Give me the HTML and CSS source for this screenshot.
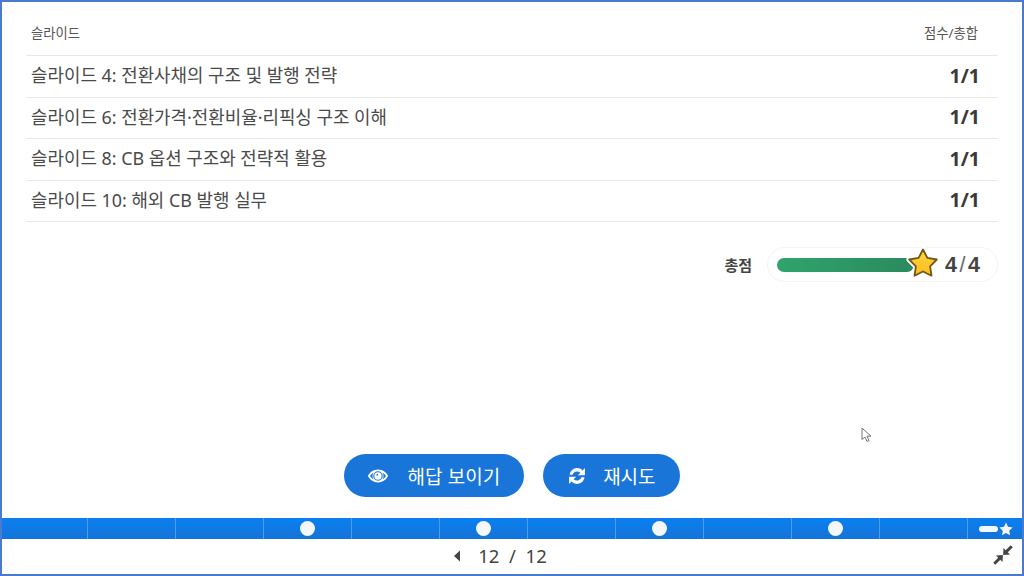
FILE: index.html
```html
<!DOCTYPE html>
<html lang="ko">
<head>
<meta charset="utf-8">
<title>슬라이드 결과</title>
<link rel="stylesheet" href="styles.css">
</head>
<body>
<div class="frame">
  <main class="stage">
    <div class="table">
      <div class="row head"><span>슬라이드</span><span>점수/총합</span></div>
      <div class="row item"><span>슬라이드 4: 전환사채의 구조 및 발행 전략</span><b>1/1</b></div>
      <div class="row item"><span>슬라이드 6: 전환가격·전환비율·리픽싱 구조 이해</span><b>1/1</b></div>
      <div class="row item"><span>슬라이드 8: CB 옵션 구조와 전략적 활용</span><b>1/1</b></div>
      <div class="row item"><span>슬라이드 10: 해외 CB 발행 실무</span><b>1/1</b></div>
    </div>
    <div class="total">
      <span class="total-label">총점</span>
      <div class="total-pill">
        <div class="track"></div>
        <svg class="star" viewBox="0 0 36 36" width="36" height="36"><defs><linearGradient id="gold" x1="0" y1="0" x2="0" y2="1"><stop offset="0" stop-color="#ffd53f"/><stop offset="1" stop-color="#fdbd1f"/></linearGradient></defs><path d="M18 3.500L22.400 11.900 31.800 13.500 25.100 20.300 26.500 29.700 18 25.500 9.500 29.700 10.900 20.300 4.200 13.500 13.600 11.900z" fill="none" stroke="#fff" stroke-width="5.500" stroke-linejoin="round"/><path d="M18 3.500L22.400 11.900 31.800 13.500 25.100 20.300 26.500 29.700 18 25.500 9.500 29.700 10.900 20.300 4.200 13.500 13.600 11.900z" fill="url(#gold)" stroke="#6f5715" stroke-width="1.800" stroke-linejoin="round"/></svg>
        <span class="total-value">4<em>/</em>4</span>
      </div>
    </div>
    <div class="actions">
      <button class="btn btn-show">
        <svg viewBox="0 0 24 24" width="22" height="22"><path fill="#fff" fill-rule="evenodd" d="M12 5C7 5 3 8 1 12c2 4 6 7 11 7s9-3 11-7c-2-4-6-7-11-7zm0 1.800a5.200 5.200 0 1 1 0 10.400 5.200 5.200 0 0 1 0-10.400zM3.300 12c1-1.700 2.400-3 4-3.800a6.500 6.500 0 0 0 0 7.600A9.800 9.800 0 0 1 3.300 12zm17.400 0c-1 1.700-2.400 3-4 3.800a6.500 6.500 0 0 0 0-7.600c1.600.8 3 2.100 4 3.800z"/><path fill="#fff" fill-rule="evenodd" d="M12 8a4 4 0 1 1 0 8 4 4 0 0 1 0-8zm0 1.500a2 2 0 0 0-2 2h2z"/></svg>
        <span>해답 보이기</span>
      </button>
      <button class="btn btn-retry">
        <svg viewBox="0 0 24 24" width="20" height="20"><path fill="#fff" d="M12 2.500c2.600 0 5 1 6.700 2.800L21.500 2.500V11h-8.500l3-3A5.800 5.800 0 0 0 6.600 10.500H3A9.200 9.200 0 0 1 12 2.500zM2.500 13H11l-3 3a5.800 5.800 0 0 0 9.400-2.500H21A9.200 9.200 0 0 1 5.300 18.700L2.500 21.500z"/></svg>
        <span>재시도</span>
      </button>
    </div>
    <svg class="cursor" viewBox="0 0 12 16" width="12" height="16"><path d="M1 1v11.500l3-2.500 2 4.500 2-1-2-4.300h4z" fill="#fff" stroke="#666" stroke-width=".9"/></svg>
  </main>
  <div class="progress">
    <i></i><i></i><i></i><i class="done"></i><i></i><i class="done"></i><i></i><i class="done"></i><i></i><i class="done"></i><i></i>
    <i class="end"><span class="mini-bar"></span><svg viewBox="0 0 24 24" width="14" height="14"><path fill="#f4f7fb" d="M12 1l3.400 7.300 7.900 1-5.800 5.500 1.500 7.900-7-3.900-7 3.900 1.500-7.900L.7 9.300l7.900-1z"/></svg></i>
  </div>
  <footer class="pager">
    <div class="pager-center">
      <svg class="prev" viewBox="0 0 8 12" width="8" height="12"><path d="M7 .5v11L1 6z" fill="#444"/></svg>
      <span class="pages">12&nbsp; / &nbsp;12</span>
    </div>
    <svg class="shrink" viewBox="0 0 20 20" width="20" height="20"><path fill="#444" d="M19.800 2.300L17.700.2l-5 5-2.200-2.200-.4 6.900 6.900-.4-2.200-2.200zM.2 17.700l2.100 2.100 5-5 2.200 2.200.4-6.900-6.900.4 2.200 2.200z"/></svg>
  </footer>
</div>
</body>
</html>
```
FILE: styles.css
```css
* { box-sizing: border-box; }
html, body { margin: 0; height: 100%; }
body {
  font-family: "Noto Sans", "Noto Sans CJK KR", sans-serif;
  color: #444;
  background: #fff;
}
.frame {
  width: 1024px;
  height: 576px;
  border: 2px solid #4a7bd0;
  display: flex;
  flex-direction: column;
  overflow: hidden;
}
.stage {
  position: relative;
  flex: 1;
  display: flex;
  flex-direction: column;
  padding: 0 24px;
}
.table { display: flex; flex-direction: column; }
.row {
  display: flex;
  justify-content: space-between;
  align-items: center;
  padding: 0 20px 0 5px;
  border-bottom: 1px solid #e8e8e8;
}
.head { height: 54px; padding-top: 7px; font-size: 13.300px; color: #555; }
.item { height: 41.500px; padding: 0 18px 4px 5px; font-size: 17.900px; color: #4a4a4a; }
.item b { font-size: 19.500px; font-weight: 700; color: #3a3a3a; margin-top: 2px; }
.total {
  display: flex;
  justify-content: flex-end;
  align-items: center;
  gap: 15px;
  margin-top: 25px;
}
.total-label { font-size: 15px; font-weight: 700; color: #444; }
.total-pill {
  position: relative;
  width: 231px;
  height: 35px;
  border: 1px solid #f4f4f4;
  border-radius: 18px;
  display: flex;
  align-items: center;
  padding-left: 9px;
}
.track {
  width: 137px;
  height: 14px;
  border-radius: 7px;
  background: linear-gradient(90deg, #2fa46c, #2b8a5e);
}
.star { position: absolute; left: 137px; top: -2px; }
.total-value {
  position: absolute;
  left: 177px;
  top: 50%;
  transform: translateY(-50%);
  font: 700 21.500px "Liberation Sans", sans-serif;
  color: #444;
}
.total-value em { font-style: normal; font-weight: 400; margin: 0 2.500px; color: #666; }
.actions {
  display: flex;
  justify-content: center;
  gap: 19px;
  margin-top: auto;
  margin-bottom: 21px;
}
.btn {
  height: 43px;
  display: flex;
  align-items: center;
  border: 0;
  border-radius: 22px;
  background: #1976d8;
  color: #fff;
  font: 400 19px "Noto Sans CJK KR", sans-serif;
}
.btn-show { padding: 0 24px 0 23px; gap: 18px; }
.btn-retry { padding: 0 24px; gap: 16px; }
.cursor { position: absolute; left: 859px; top: 425px; }
.progress {
  height: 21px;
  flex: none;
  display: grid;
  grid-template-columns: 86px repeat(10, 88px) 1fr;
  background: linear-gradient(#0a80f0, #1573d8);
}
.progress i {
  display: flex;
  align-items: center;
  justify-content: center;
  border-right: 1px solid #4a9df0;
}
.progress i.end {
  border-right: 0;
  gap: 1px;
  justify-content: flex-start;
  padding-left: 11px;
}
.progress i.done::after {
  content: "";
  width: 15px;
  height: 15px;
  border-radius: 50%;
  background: #f4f7fb;
}
.mini-bar {
  width: 19px;
  height: 6px;
  background: #f4f7fb;
  border-radius: 3px;
}
.pager {
  height: 35px;
  flex: none;
  position: relative;
  display: flex;
  align-items: center;
  justify-content: center;
  padding-bottom: 2px;
}
.pager-center { display: flex; align-items: center; gap: 17px; margin-right: 24px; }
.pages { font: 400 18.500px "Noto Sans", sans-serif; color: #444; }
.shrink { position: absolute; right: 9px; top: 6px; }
```
